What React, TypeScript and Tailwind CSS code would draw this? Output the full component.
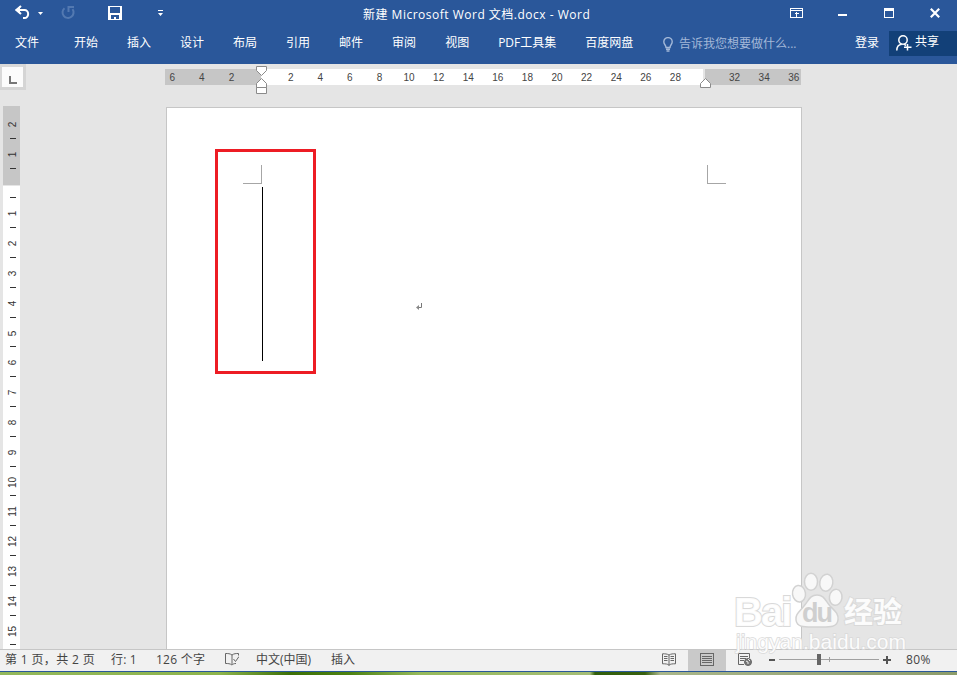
import type { ReactNode } from 'react'

const tabs = ['开始', '插入', '设计', '布局', '引用', '邮件', '审阅', '视图', 'PDF工具集', '百度网盘']

const columnMarks = ['6', '4', '2', '', '2', '4', '6', '8', '10', '12', '14', '16', '18', '20', '22', '24', '26', '28', '', '32', '34', '36']
const rowMarks = ['2', '1', '', '1', '2', '3', '4', '5', '6', '7', '8', '9', '10', '11', '12', '13', '14', '15']

function QuickAccess() {
    return (
        <div className="flex h-[26px] w-[166px] shrink-0 items-center">
            <svg className="-mt-1 ml-3.5 h-4 w-4" viewBox="0 0 16 16" fill="none" stroke="white" strokeWidth="2">
                <path d="M7 3 2.500 7 7 11M2 7H10.500a3.200 3.500 0 0 1 0 8H9" />
                <path d="M1 7 6 3v8z" fill="white" stroke="none" />
            </svg>
            <svg className="ml-2 h-[3px] w-[5px]" viewBox="0 0 5 3" fill="white">
                <path d="M0 0h5L2.500 3z" />
            </svg>
            <svg className="ml-[17px] h-4 w-4" viewBox="0 0 16 16" fill="none" stroke="#5379b1" strokeWidth="2">
                <path d="M4.500 3.200A5.500 5.500 0 1 0 12.500 4.200M8.500 7V2H14" />
            </svg>
            <svg className="ml-[32px] h-3.5 w-3.5" viewBox="0 0 14 14" fill="white" shapeRendering="crispEdges">
                <path fillRule="evenodd" d="M0 0h14v14H0zM2 1v6h10V1zM3 9v4h3v-2h2v2h3V9z" />
            </svg>
            <svg className="ml-[36px] h-1.5 w-[5px]" viewBox="0 0 5 6" fill="white">
                <path d="M0 0h5v1H0zM0 3h5L2.500 6z" />
            </svg>
        </div>
    )
}

function WindowButtons() {
    return (
        <div className="ml-auto flex h-[26px] items-center pr-[17px]">
            <svg className="mr-[35px] h-[10px] w-[13px]" viewBox="0 0 13 10" shapeRendering="crispEdges">
                <path d="M.5.5h12v9H.5zM1 2.500h11M6.500 4v5M4.500 5.500h4" fill="none" stroke="white" />
            </svg>
            <div className="mt-1 mr-[37px] h-0.5 w-[9px] bg-white" />
            <div className="mr-[36px] h-[10px] w-[10px] border border-t-[3px] border-white" />
            <svg className="h-[10px] w-[10px]" viewBox="0 0 10 10" stroke="white" strokeWidth="2.200">
                <path d="m.8.8 8.400 8.400M9.200.8.8 9.200" />
            </svg>
        </div>
    )
}

function TitleBar() {
    return (
        <div className="flex h-[29px] text-white">
            <QuickAccess />
            <div className="ml-[197px] whitespace-nowrap pt-[5px] text-[12px] leading-5 tracking-[0.500px]">
                新建 Microsoft Word 文档.docx - Word
            </div>
            <WindowButtons />
        </div>
    )
}

function RibbonTabs() {
    return (
        <div className="flex h-[35px] whitespace-nowrap pl-[15px] text-[12px] leading-[27px] text-white">
            <span className="mr-[35px]">文件</span>
            <div className="flex gap-[29px]">
                {tabs.map((tab) => (
                    <span key={tab}>{tab}</span>
                ))}
            </div>
            <div className="ml-auto flex text-[#a3b8d8]">
                <svg className="mr-1.5 mt-2 h-[15px] w-[10px]" viewBox="0 0 10 15" fill="none" stroke="currentColor" strokeWidth="1.400">
                    <path d="M3 10.500C3 8 .8 7.500.8 4.800a4.200 4.200 0 0 1 8.400 0C9.200 7.500 7 8 7 10.500zM3 12.300h4M3.500 14h3" />
                </svg>
                <span className="w-[176px] leading-[29px]">告诉我您想要做什么...</span>
            </div>
            <span className="w-[34px]">登录</span>
            <div className="mt-0.5 flex h-[25px] w-[68px] bg-[#124078] pl-[7px] leading-[22px]">
                <svg className="mr-[3px] mt-1 h-4 w-4" viewBox="0 0 16 16" fill="none" stroke="white" strokeWidth="1.500">
                    <circle cx="7" cy="5" r="4.200" />
                    <path d="M.8 15.500c0-4 2.200-6 5-6.300M8 9.200l2 1.300M11.500 9v6.500M8 12.300h7.500" />
                </svg>
                共享
            </div>
        </div>
    )
}

function HorizontalRuler() {
    return (
        <div className="relative ml-[165px] mt-[5px] h-4 w-[636px]">
            <div className="flex h-4">
                <div className="w-[96px] bg-[#c6c6c6]" />
                <div className="w-[442px] bg-white" />
                <div className="w-0.5 bg-[#e5e5e5]" />
                <div className="flex-1 bg-[#c6c6c6]" />
            </div>
            <div className="absolute -left-[7.500px] top-0 flex text-[10px] leading-[17px] text-[#444]">
                {columnMarks.map((mark, i) => (
                    <span key={i} className="w-[29.600px] text-center">{mark}</span>
                ))}
            </div>
            <svg className="absolute -top-[3px] left-[91px] h-7 w-[11px]" viewBox="0 0 11 28" fill="white" stroke="#8a8a8a">
                <path d="M.5.500h10v4l-5 5-5-5zM.5 21.500v-4l5-5 5 5v4zM.5 21.500h10v6H.5z" />
            </svg>
            <svg className="absolute left-[535px] top-[9px] h-[10px] w-[11px]" viewBox="0 0 11 10" fill="white" stroke="#8a8a8a">
                <path d="M.5 9.500v-4l5-5 5 5v4z" />
            </svg>
        </div>
    )
}

function VerticalRuler() {
    return (
        <div className="ml-[3px] mt-[16px] flex h-[543px] w-[17px] flex-col overflow-hidden bg-[linear-gradient(#c6c6c6_79px,#e5e5e5_79px,#e5e5e5_80px,#fff_80px)] pt-[11px]">
            {rowMarks.map((mark, i) => (
                <div key={i} className="flex h-[29.800px] shrink-0 flex-col items-center pl-[2px]">
                    <span className="flex h-[14.900px] w-4 -rotate-90 items-center justify-center text-[10px] leading-none text-[#333]">{mark}</span>
                    <span className="mt-[6px] h-px w-1.5 bg-[#333]" />
                </div>
            ))}
        </div>
    )
}

function Watermark() {
    return (
        <div className="absolute left-[734px] top-[571px] flex h-[85px] w-[175px] flex-col font-['Liberation_Sans','Noto_Sans_CJK_SC',sans-serif] text-white/90">
            <div className="flex h-[59px] font-bold">
                <div className="w-[59px] pt-[22px] text-[40px] leading-[38px] tracking-[-2px] [-webkit-text-stroke:2px_#d9d9d9] [paint-order:stroke_fill]">Bai</div>
                <div className="relative w-[51px]">
                    <svg className="absolute -left-[3px] top-0 h-[60px] w-[54px]" viewBox="0 0 54 60" fill="#f8f8f8" stroke="#d2d2d2" strokeWidth="1.500">
                        <ellipse cx="9" cy="22.700" rx="6.500" ry="8.300" transform="rotate(-8 9 22.700)" />
                        <ellipse cx="21" cy="10.700" rx="6.500" ry="8.500" />
                        <ellipse cx="36.300" cy="11.700" rx="6.500" ry="8.500" transform="rotate(10 36.300 11.700)" />
                        <ellipse cx="45.700" cy="26.300" rx="6.300" ry="8" transform="rotate(8 45.700 26.300)" />
                        <path d="M27 24c7 0 8 5 13 11 5 5 9 8 8 14-1 8-9 7-21 7S7 57 6 49c-1-5 3-8 8-14s6-11 13-11z" />
                    </svg>
                    <span className="relative left-[9px] top-[26px] text-[27px] leading-[32px] tracking-[-2px] text-[#cfcfcf]">du</span>
                </div>
                <div className="pt-[27px] text-[29px] leading-[30px] [-webkit-text-stroke:2px_#d9d9d9] [paint-order:stroke_fill]">经验</div>
            </div>
            <div className="pl-0.5 text-[21px] leading-[23px] tracking-[0.050px] [-webkit-text-stroke:1.500px_#d9d9d9] [paint-order:stroke_fill]">jingyan.baidu.com</div>
        </div>
    )
}

function Page() {
    return (
        <div className="relative ml-[166px] mt-[22px] h-[542px] w-[636px] border border-b-0 border-[#c6c6c6] bg-white">
            <div className="absolute left-[76px] top-[57px] h-[19px] w-[19px] border-b border-r border-[#a6a6a6]" />
            <div className="absolute left-[540px] top-[57px] h-[19px] w-[19px] border-b border-l border-[#a6a6a6]" />
            <div className="absolute left-[95px] top-[79px] h-[174px] w-px bg-black" />
            <div className="absolute left-[48px] top-[41px] h-[225px] w-[101px] border-[3px] border-[#ed1c24]" />
            <svg className="absolute left-[249px] top-[195px] h-[8px] w-[7px]" viewBox="0 0 7 8" fill="none" stroke="#777">
                <path d="M5.500 0v4.500H1" />
                <path d="M0 4.500 3 2v5z" fill="#888" stroke="none" />
            </svg>
        </div>
    )
}

function StatusIcon({ children, className }: { children: ReactNode; className: string }) {
    return (
        <svg className={className} viewBox="0 0 14 13" fill="none" stroke="#666">
            {children}
        </svg>
    )
}

function StatusBar() {
    return (
        <div className="flex h-[22px] whitespace-nowrap border-t border-[#c6c6c6] bg-[#f1f1f1] pl-[5px] text-[12px] leading-[19px] text-[#444]">
            <span className="w-[106px] tracking-[0.350px]">第 1 页，共 2 页</span>
            <span className="w-[45px] tracking-[0.200px]">行: 1</span>
            <span className="w-[69px] tracking-[0.250px]">126 个字</span>
            <StatusIcon className="mt-[3px] h-[13px] w-3.5">
                <path d="M7 2v9M7 2C5 .5 3 .5.5.5v10C3 10.500 5 10.500 7 12c1-1 2-1.500 4-1.500M7 2C9 .5 11 .5 13.500.5v2M8.500 6l2 2.500 3.500-5" />
            </StatusIcon>
            <span className="ml-[17px] w-[75px]">中文(中国)</span>
            <span>插入</span>

            <div className="ml-auto flex w-[295px]">
                <StatusIcon className="mt-[3px] h-[13px] w-3.5">
                    <path d="M7 2v10.500M7 2C5 .8 3 .8.5.8v10c3 0 5 0 6.500 1.500 1.500-1.500 3.500-1.500 6.500-1.500V.8C11 .8 9 .8 7 2M2 3.500h3.500M2 5.500h3.500M2 7.500h3.500M8.500 3.500H12M8.500 5.500H12M8.500 7.500H12" />
                </StatusIcon>
                <div className="ml-3 flex w-[38px] justify-center bg-[#c9c9c9]">
                    <StatusIcon className="mt-[3px] h-[13px] w-3.5">
                        <path d="M.5.5h13v12H.5zM2 3.500h10M2 5.500h10M2 7.500h10M2 9.500h10" shapeRendering="crispEdges" />
                    </StatusIcon>
                </div>
                <StatusIcon className="ml-3 mt-[3px] h-[13px] w-3.5">
                    <path d="M6 11.500H.5V.5h11V5M2 3.500h8M2 5.500h6M2 7.500h4" />
                    <circle cx="10" cy="9" r="3.500" fill="#777" />
                    <path d="m8 8 2 1 0 2M10 6l2 2" stroke="#eee" />
                </StatusIcon>
                <div className="ml-[17px] mt-[9px] h-0.5 w-1.5 bg-[#555]" />
                <div className="relative ml-1 mt-[9px] h-px w-[100px] bg-[#a0a0a0]">
                    <div className="absolute -top-[5px] left-[38px] h-[11px] w-1 bg-[#666]" />
                    <div className="absolute -top-0.5 left-[50px] h-[5px] w-px bg-[#a0a0a0]" />
                </div>
                <svg className="ml-1 mt-1.5 h-2 w-2" viewBox="0 0 8 8" fill="#555">
                    <path d="M3 0h2v3h3v2H5v3H3V5H0V3h3z" />
                </svg>
                <span className="ml-[15px] tracking-[0.400px]">80%</span>
            </div>
        </div>
    )
}

export default function App() {
    return (
        <div className="relative h-[675px] w-[957px] overflow-hidden bg-[#e5e5e5] font-['Open_Sans','Noto_Sans_CJK_SC',sans-serif]">
            <header className="h-16 bg-[#2a579a]">
                <TitleBar />
                <RibbonTabs />
            </header>
            <main className="flex h-[585px] font-['Liberation_Sans',sans-serif]">
                <div className="w-[26px] shrink-0">
                    <div className="flex h-[26px] w-[26px] border-b-[3px] border-r-[3px] border-[#d5d5d5] bg-[#d9d9d9] pl-0.5 pt-[3px]">
                        <div className="flex h-5 w-[21px] items-end bg-[#fcfcfc] pb-[3px] pl-[7px]">
                            <div className="h-2 w-2 border-b-2 border-l-2 border-[#777]" />
                        </div>
                    </div>
                    <VerticalRuler />
                </div>
                <div className="-ml-[26px]">
                    <HorizontalRuler />
                    <Page />
                </div>
            </main>
            <StatusBar />
            <div className="h-px bg-[#2a579a]" />
            <div className="h-[3px] bg-[linear-gradient(90deg,#93b85c_0,#8db44c_220px,#3d7007_290px,#4d8212_350px,#96ba5c_420px,#a4bd76_590px,#315e0b_595px,#38600f_645px,#a9b68a_660px,#8c9c6a_957px)]" />
            <Watermark />
        </div>
    )
}
